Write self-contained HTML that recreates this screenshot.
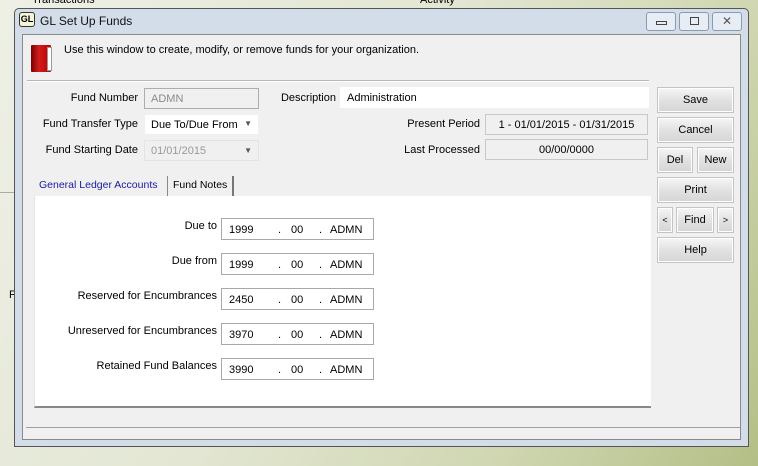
<!DOCTYPE html>
<html><head><meta charset="utf-8"><style>
*{margin:0;padding:0;box-sizing:border-box}
body{width:758px;height:466px;overflow:hidden;position:relative;font-family:"Liberation Sans",Arial,sans-serif;font-size:11px;color:#000;white-space:nowrap;
background:linear-gradient(120deg,#eef0e6 0%,#e2e6d2 45%,#cfd6b0 75%,#b3bf86 100%);}
.a{position:absolute}
.lbl{position:absolute;text-align:right;font-size:11px}
.box{position:absolute;background:#fff;border:1px solid #abadb3;height:21px;padding:4px 6px;font-size:11px}
.dis{background:#f0f0f0;color:#8a8a8a}
.btn{position:absolute;background:linear-gradient(#f4f4f4,#e2e2e2 50%,#d6d6d6);border:1px solid #fff;outline:1px solid #c4c4c4;text-align:center;font-size:11px;line-height:22px;height:24px}
.gl{position:absolute;left:221px;width:153px;height:22px;border:1px solid #a8a8a8;background:#fff;font-size:11px;padding:5px 7px}
.gl span{position:absolute;top:5px}
</style></head><body>
<div class="a" style="left:32px;top:-6px;font-size:11px">Transactions</div>
<div class="a" style="left:420px;top:-6px;font-size:11px">Activity</div>
<div class="a" style="left:0;top:192px;width:14px;height:1px;background:#aaa"></div>
<div class="a" style="left:9px;top:289px;font-size:11px">F</div>
<!-- window frame -->
<div class="a" style="left:14px;top:8px;width:735px;height:439px;background:#d3dde9;border:1px solid #555;border-radius:5px 5px 0 0"></div>
<div class="a" style="left:19px;top:12px;width:16px;height:15px;border:1px solid #333;border-radius:3px;background:#f5f5d8;font-size:9px;font-weight:bold;line-height:13px;text-align:center">GL</div>
<div class="a" style="left:40px;top:14px;font-size:12px;color:#111">GL Set Up Funds</div>
<div class="a" style="left:646px;top:12px;width:30px;height:19px;border:1px solid #8a9ab0;border-radius:3px;background:#e6edf5"><div class="a" style="left:9px;top:8px;width:11px;height:4px;border:1px solid #444"></div></div>
<div class="a" style="left:679px;top:12px;width:30px;height:19px;border:1px solid #8a9ab0;border-radius:3px;background:#e6edf5"><div class="a" style="left:10px;top:4px;width:9px;height:8px;border:1px solid #444"></div></div>
<div class="a" style="left:712px;top:12px;width:30px;height:19px;border:1px solid #8a9ab0;border-radius:3px;background:#e6edf5;text-align:center;font-size:12px;line-height:17px;color:#555">✕</div>
<!-- client -->
<div class="a" style="left:22px;top:34px;width:719px;height:406px;background:#f0f0f0;border:1px solid #8a8a8a"></div>
<!-- book icon -->
<div class="a" style="left:31px;top:45px;width:20px;height:27px;background:linear-gradient(90deg,#7a0000,#d41c1c 40%,#b00);border-radius:1px"></div>
<div class="a" style="left:47px;top:47px;width:5px;height:24px;background:#fff;border:1px solid #999"></div>
<div class="a" style="left:64px;top:44px;font-size:11px">Use this window to create, modify, or remove funds for your organization.</div>
<div class="a" style="left:27px;top:80px;width:622px;height:1px;background:#b8b8b8"></div>
<div class="a" style="left:27px;top:81px;width:622px;height:1px;background:#fff"></div>
<!-- fields -->
<div class="lbl" style="left:40px;width:98px;top:92px">Fund Number</div>
<div class="box dis" style="left:144px;top:88px;width:115px">ADMN</div>
<div class="lbl" style="left:30px;width:108px;top:118px">Fund Transfer Type</div>
<div class="box" style="left:144px;top:114px;width:115px;border-color:#f0f0f0">Due To/Due From<span class="a" style="right:6px;top:4px;color:#555;font-size:8px">▼</span></div>
<div class="lbl" style="left:30px;width:108px;top:144px">Fund Starting Date</div>
<div class="box dis" style="left:144px;top:140px;width:115px;border-color:#e4e4e4;color:#999">01/01/2015<span class="a" style="right:6px;top:5px;color:#555;font-size:8px">▼</span></div>
<div class="lbl" style="left:270px;width:66px;top:92px">Description</div>
<div class="box" style="left:340px;top:87px;width:309px;border-color:#fff">Administration</div>
<div class="lbl" style="left:380px;width:100px;top:118px">Present Period</div>
<div class="box dis" style="left:485px;top:114px;width:163px;color:#000;text-align:center;border-color:#c8c8c8">1 - 01/01/2015 - 01/31/2015</div>
<div class="lbl" style="left:380px;width:100px;top:144px">Last Processed</div>
<div class="box dis" style="left:485px;top:139px;width:163px;color:#000;text-align:center;border-color:#c8c8c8">00/00/0000</div>
<!-- tabs -->
<div class="a" style="left:34px;top:176px;width:134px;height:20px;background:#f0f0f0;color:#1a1aa0;padding:3px 5px;border-right:1px solid #888;font-size:10.5px">General Ledger Accounts</div>
<div class="a" style="left:169px;top:176px;width:65px;height:20px;padding:3px 4px;border-right:2px solid #777;font-size:10.5px">Fund Notes</div>
<div class="a" style="left:34px;top:196px;width:617px;height:212px;background:#fff;border-left:1px solid #e4e4e4;border-bottom:2px solid #888"></div>
<div class="a" style="left:26px;top:427px;width:714px;height:1px;background:#a0a0a0"></div>
<!-- GL rows -->
<div class="lbl" style="left:60px;width:157px;top:220px">Due to</div>
<div class="gl" style="top:218px"><span style="left:7px">1999</span><span style="left:56px">.</span><span style="left:69px">00</span><span style="left:97px">.</span><span style="left:108px">ADMN</span></div>
<div class="lbl" style="left:60px;width:157px;top:255px">Due from</div>
<div class="gl" style="top:253px"><span style="left:7px">1999</span><span style="left:56px">.</span><span style="left:69px">00</span><span style="left:97px">.</span><span style="left:108px">ADMN</span></div>
<div class="lbl" style="left:40px;width:177px;top:290px">Reserved for Encumbrances</div>
<div class="gl" style="top:288px"><span style="left:7px">2450</span><span style="left:56px">.</span><span style="left:69px">00</span><span style="left:97px">.</span><span style="left:108px">ADMN</span></div>
<div class="lbl" style="left:40px;width:177px;top:325px">Unreserved for Encumbrances</div>
<div class="gl" style="top:323px"><span style="left:7px">3970</span><span style="left:56px">.</span><span style="left:69px">00</span><span style="left:97px">.</span><span style="left:108px">ADMN</span></div>
<div class="lbl" style="left:40px;width:177px;top:360px">Retained Fund Balances</div>
<div class="gl" style="top:358px"><span style="left:7px">3990</span><span style="left:56px">.</span><span style="left:69px">00</span><span style="left:97px">.</span><span style="left:108px">ADMN</span></div>
<!-- buttons -->
<div class="btn" style="left:658px;top:88px;width:75px">Save</div>
<div class="btn" style="left:658px;top:118px;width:75px">Cancel</div>
<div class="btn" style="left:658px;top:148px;width:34px">Del</div>
<div class="btn" style="left:698px;top:148px;width:35px">New</div>
<div class="btn" style="left:658px;top:178px;width:75px">Print</div>
<div class="btn" style="left:658px;top:208px;width:14px;font-size:9px">&lt;</div>
<div class="btn" style="left:677px;top:208px;width:36px">Find</div>
<div class="btn" style="left:718px;top:208px;width:15px;font-size:9px">&gt;</div>
<div class="btn" style="left:658px;top:238px;width:75px">Help</div>
</body></html>
